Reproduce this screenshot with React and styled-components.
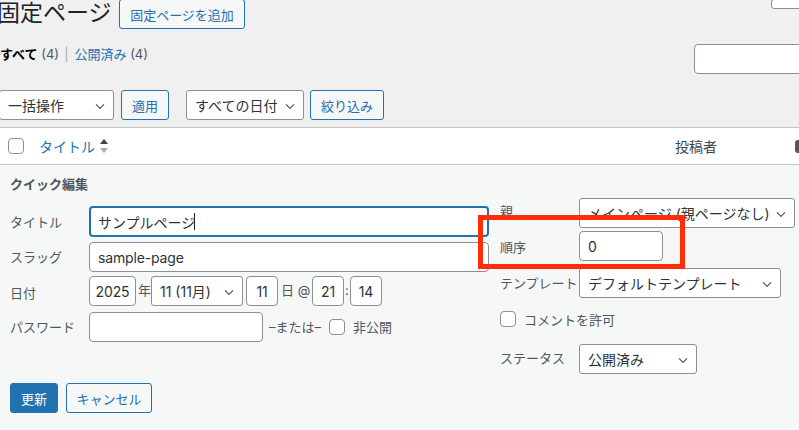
import React from 'react';
import styled, { createGlobalStyle } from 'styled-components';

const GlobalStyle = createGlobalStyle`
  html, body {
    margin: 0;
    padding: 0;
    background: #f0f0f1;
  }
  * {
    box-sizing: border-box;
  }
`;

const FONT = `Inter, "Noto Sans CJK JP", sans-serif`;
const chevron = `url("data:image/svg+xml,%3Csvg xmlns='http://www.w3.org/2000/svg' width='20' height='20' viewBox='0 0 20 20'%3E%3Cpath d='M5 8l5 5 5-5' fill='none' stroke='%23555' stroke-width='1.5'/%3E%3C/svg%3E")`;

const Page = styled.div`
  position: relative;
  width: 799px;
  height: 430px;
  overflow: hidden;
  background: #f0f0f1;
  color: #3c434a;
  font-family: ${FONT};
  font-size: 13px;
`;

const HeaderRow = styled.div`
  display: flex;
  align-items: flex-start;
  height: 42px;
  margin-top: -1px;
`;

const Heading = styled.h1`
  margin: -2px 0 0 -3px;
  width: 122px;
  font-size: 23px;
  line-height: 33px;
  font-weight: 400;
  white-space: nowrap;
  color: #1d2327;
`;

const Button = styled.button`
  flex: none;
  height: 30px;
  width: ${p => p.$width}px;
  margin: ${p => p.$margin || 0};
  padding: 0;
  border: 1px solid #2271b1;
  border-radius: 3px;
  background: ${p => (p.$primary ? '#2271b1' : '#f6f7f7')};
  color: ${p => (p.$primary ? '#fff' : '#2271b1')};
  font-family: ${FONT};
  font-size: 13px;
  white-space: nowrap;
`;

const TopSearchEdge = styled.div`
  width: 40px;
  height: 10px;
  margin-left: auto;
  margin-right: -12px;
  background: #fff;
  border: 1px solid #8c8f94;
  border-radius: 3px;
`;

const SubRow = styled.div`
  display: flex;
  align-items: flex-start;
  height: 49px;
`;

const ViewList = styled.div`
  margin-top: 3px;
  line-height: 20px;
  color: #50575e;
  white-space: nowrap;

  strong {
    color: #000;
    font-weight: 700;
  }

  a {
    color: #2271b1;
  }

  i {
    margin: 0 6px 0 5px;
    color: #a7aaad;
    font-style: normal;
  }
`;

const SearchBox = styled.input`
  width: 120px;
  height: 30px;
  margin: 3px -15px 0 auto;
  background: #fff;
  border: 1px solid #8c8f94;
  border-radius: 4px;
`;

const FilterRow = styled.div`
  display: flex;
  align-items: center;
  height: 30px;
  margin-bottom: 7px;
`;

const Select = styled.select`
  appearance: none;
  flex: none;
  width: ${p => p.$width}px;
  height: 30px;
  margin: ${p => p.$margin || 0};
  padding: 0 20px 0 8px;
  background: #fff ${chevron} no-repeat right 5px top 55%;
  background-size: 16px 16px;
  border: 1px solid #8c8f94;
  border-radius: 3px;
  color: #2c3338;
  font-family: ${FONT};
  font-size: 14px;
`;

const TableHead = styled.div`
  display: flex;
  align-items: center;
  height: 38px;
  background: #fff;
  border-top: 1px solid #c3c4c7;
  border-bottom: 1px solid #c3c4c7;
`;

const Checkbox = styled.span`
  display: block;
  flex: none;
  width: 16px;
  height: 16px;
  margin: ${p => p.$margin || 0};
  background: #fff;
  border: 1px solid #8c8f94;
  border-radius: 4px;
`;

const TitleCol = styled.div`
  flex: none;
  display: flex;
  align-items: center;
  gap: 4px;
  width: 636px;
  margin-left: 15px;
  color: #2271b1;
  font-size: 14px;
`;

const AuthorCol = styled.div`
  flex: none;
  width: 120px;
  font-size: 14px;
  color: #3c434a;
`;

const ColEdge = styled.span`
  flex: none;
  width: 8px;
  height: 13px;
  background: #50575e;
  border-radius: 3px;
`;

const QuickEdit = styled.div`
  height: 266px;
  background: #f6f7f7;
  padding-left: 10px;
`;

const EditColumns = styled.div`
  display: flex;
  height: 218px;
`;

const LeftCol = styled.div`
  flex: none;
  width: 479px;
`;

const RightCol = styled.div`
  flex: none;
  width: 299px;
  margin-left: 11px;
  padding-top: 33px;
`;

const EditTitle = styled.div`
  height: 41px;
  padding-top: 10px;
  line-height: 18px;
  font-size: 13px;
  font-weight: 700;
  color: #50575e;
`;

const Row = styled.div`
  display: flex;
  align-items: center;
  height: ${p => p.$height || 30}px;
  margin-bottom: ${p => p.$gap || 0}px;
`;

const Label = styled.span`
  flex: none;
  width: ${p => p.$width || 79}px;
  font-size: 13px;
  color: #50575e;
  white-space: nowrap;
  transform: translateY(${p => p.$shift || 0}px);
`;

const Input = styled.input`
  flex: ${p => (p.$width ? 'none' : 1)};
  width: ${p => p.$width || '100%'};
  height: 30px;
  margin: ${p => p.$margin || 0};
  padding: 0 ${p => (p.$pad === undefined ? 8 : p.$pad)}px;
  background: #fff;
  border: 1px solid #8c8f94;
  border-radius: 4px;
  color: #2c3338;
  font-family: ${FONT};
  font-size: 14px;
  letter-spacing: -0.15px;
  text-align: ${p => p.$align || 'left'};
  outline: none;
`;

const FocusedInput = styled(Input)`
  height: 31px;
  padding: 0 7px;
  border: 2px solid #2271b1;
  letter-spacing: 0;
`;

const TitleField = styled.div`
  position: relative;
  flex: 1;
  display: flex;
`;

const Caret = styled.span`
  position: absolute;
  left: 105px;
  top: 7px;
  width: 1px;
  height: 17px;
  background: #1d2327;
`;

const Unit = styled.span`
  flex: none;
  width: ${p => (p.$width ? `${p.$width}px` : 'auto')};
  margin: ${p => p.$margin || 0};
  font-size: 13px;
  color: #50575e;
  white-space: nowrap;
  transform: translateY(${p => p.$shift || 0}px);
`;

const Actions = styled.div`
  display: flex;
  gap: 8px;
`;

const RedFrame = styled.div`
  position: absolute;
  left: 478px;
  top: 215px;
  width: 207px;
  height: 54px;
  border: 5px solid #ff2d0a;
`;

const SortIcon = () => (
  <svg width="10" height="16" viewBox="0 0 10 16">
    <path d="M5 1l4 5H1z" fill="#3c434a" />
    <path d="M5 15l4-5H1z" fill="#a7aaad" />
  </svg>
);

export default function App() {
  return (
    <Page>
      <GlobalStyle />
      <HeaderRow>
        <Heading>固定ページ</Heading>
        <Button $width={126}>固定ページを追加</Button>
        <TopSearchEdge />
      </HeaderRow>
      <SubRow>
        <ViewList>
          <strong>すべて</strong> (4)<i>|</i><a>公開済み</a> (4)
        </ViewList>
        <SearchBox />
      </SubRow>
      <FilterRow>
        <Select $width={115} $margin="0 0 0 -1px" defaultValue="bulk">
          <option value="bulk">一括操作</option>
        </Select>
        <Button $width={48} $margin="0 0 0 7px">適用</Button>
        <Select $width={118} $margin="0 0 0 17px" defaultValue="all">
          <option value="all">すべての日付</option>
        </Select>
        <Button $width={74} $margin="0 0 0 6px">絞り込み</Button>
      </FilterRow>
      <TableHead>
        <Checkbox $margin="0 0 0 8px" />
        <TitleCol>
          タイトル
          <SortIcon />
        </TitleCol>
        <AuthorCol>投稿者</AuthorCol>
        <ColEdge />
      </TableHead>
      <QuickEdit>
        <EditColumns>
          <LeftCol>
            <EditTitle>クイック編集</EditTitle>
            <Row $height={31} $gap={5}>
              <Label>タイトル</Label>
              <TitleField>
                <FocusedInput defaultValue="サンプルページ" />
                <Caret />
              </TitleField>
            </Row>
            <Row $gap={4}>
              <Label $shift={-1}>スラッグ</Label>
              <Input defaultValue="sample-page" />
            </Row>
            <Row $gap={6}>
              <Label $shift={1}>日付</Label>
              <Input $width="47px" $pad={0} $align="center" defaultValue="2025" />
              <Unit $width={13} $margin="0 0 0 2px" $shift={-2}>年</Unit>
              <Select $width={92} defaultValue="11">
                <option value="11">11 (11月)</option>
              </Select>
              <Input $width="32px" $margin="0 0 0 3px" $pad={0} $align="center" defaultValue="11" />
              <Unit $width={26} $margin="0 0 0 3px" $shift={-2}>日 @</Unit>
              <Input $width="32px" $margin="0 0 0 5px" $pad={0} $align="center" defaultValue="21" />
              <Unit $width={2} $margin="0 3px 0 1px" $shift={-1}>:</Unit>
              <Input $width="32px" $pad={0} $align="center" defaultValue="14" />
            </Row>
            <Row>
              <Label $shift={-1}>パスワード</Label>
              <Input $width="174px" />
              <Unit $width={53} $margin="0 7px 0 6px" $shift={-1}>–または–</Unit>
              <Checkbox />
              <Unit $margin="0 0 0 8px" $shift={-1}>非公開</Unit>
            </Row>
          </LeftCol>
          <RightCol>
            <Row $gap={3}>
              <Label $shift={-3}>親</Label>
              <Select $width={216} defaultValue="main">
                <option value="main">メインページ (親ページなし)</option>
              </Select>
            </Row>
            <Row $gap={7}>
              <Label>順序</Label>
              <Input $width="84px" defaultValue="0" />
            </Row>
            <Row $gap={13}>
              <Label $shift={-1}>テンプレート</Label>
              <Select $width={202} defaultValue="default">
                <option value="default">デフォルトテンプレート</option>
              </Select>
            </Row>
            <Row $height={16} $gap={17}>
              <Checkbox />
              <Unit $margin="0 0 0 8px">コメントを許可</Unit>
            </Row>
            <Row>
              <Label $shift={-2}>ステータス</Label>
              <Select $width={118} defaultValue="publish">
                <option value="publish">公開済み</option>
              </Select>
            </Row>
          </RightCol>
        </EditColumns>
        <Actions>
          <Button $primary $width={48}>更新</Button>
          <Button $width={86}>キャンセル</Button>
        </Actions>
      </QuickEdit>
      <RedFrame />
    </Page>
  );
}
